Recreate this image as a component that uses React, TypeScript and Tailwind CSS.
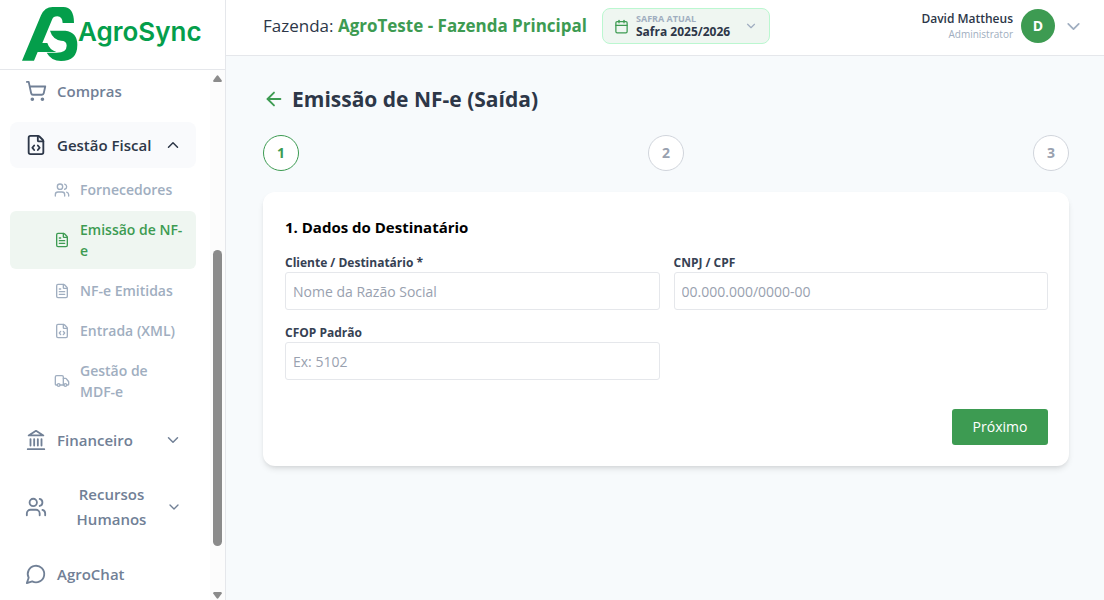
import React from 'react';
import {
  ArrowLeft,
  Calendar,
  ChevronDown,
  ChevronUp,
  FileCode,
  FileText,
  ShoppingCart,
  Truck,
  Users,
  type LucideIcon,
} from 'lucide-react';
import clsx from 'clsx';

const subItems: { label: string; icon: LucideIcon; active?: boolean }[] = [
  { label: 'Fornecedores', icon: Users },
  { label: 'Emissão de NF-e', icon: FileText, active: true },
  { label: 'NF-e Emitidas', icon: FileText },
  { label: 'Entrada (XML)', icon: FileCode },
  { label: 'Gestão de MDF-e', icon: Truck },
];

const fields = [
  {
    id: 'cliente',
    label: 'Cliente / Destinatário *',
    placeholder: 'Nome da Razão Social',
  },
  { id: 'cnpj', label: 'CNPJ / CPF', placeholder: '00.000.000/0000-00' },
  { id: 'cfop', label: 'CFOP Padrão', placeholder: 'Ex: 5102' },
];

const steps = [1, 2, 3];

const Landmark = () => (
  <svg
    className="size-[22px] shrink-0"
    viewBox="0 0 24 24"
    fill="none"
    stroke="currentColor"
    strokeWidth="2"
    strokeLinecap="round"
    strokeLinejoin="round"
  >
    <path d="M3 22h18M6 18v-7M10 18v-7M14 18v-7M18 18v-7" />
    <path d="m12 2 8 5H4Z" />
  </svg>
);

const ChatBubble = () => (
  <svg
    className="size-[22px] shrink-0"
    viewBox="0 0 24 24"
    fill="none"
    stroke="currentColor"
    strokeWidth="2"
    strokeLinecap="round"
    strokeLinejoin="round"
  >
    <path d="M7.9 20A9 9 0 1 0 4 16.1L2 22Z" />
  </svg>
);

const Logo = () => (
  <a href="#" className="flex items-center text-[#049e4b]">
    <svg className="h-[54px] w-14" viewBox="0 0 168 162" fill="currentColor">
      <path d="M0 161 57 25Q68 0 92 0H124Q156 0 156 48H122Q121 28 106 28Q94 28 90 38L61 108H76Q82 128 103 135H47L36 161Z" />
      <path d="M84 71H130Q166 76 166 113Q166 162 117 162Q88 162 74 137H104Q134 137 134 116Q134 101 117 101Q92 97 84 71Z" />
    </svg>
    <span className="pb-1 font-['Inter',sans-serif] text-[26px] leading-8 font-semibold">
      AgroSync
    </span>
  </a>
);

const navButton =
  'flex w-full items-center gap-2.5 rounded-lg py-[11px] pr-3.5 pl-[15px]';

const Sidebar = () => (
  <aside className="flex w-[226px] shrink-0 flex-col border-r border-gray-200 bg-white">
    <div className="flex h-[70px] shrink-0 items-center border-b border-gray-200 pb-0.5 pl-[22px]">
      <Logo />
    </div>
    <div className="flex min-h-0 flex-1">
      <nav className="min-w-0 flex-1 overflow-hidden pr-3.5 pl-2.5 text-[15px] leading-6 font-semibold text-[#718096]">
        <ul className="-mt-0.5">
          <li className="mb-2">
            <a href="#" className={navButton}>
              <ShoppingCart className="size-[22px] shrink-0" />
              Compras
            </a>
          </li>
          <li className="mb-[7px]">
            <button
              type="button"
              aria-expanded="true"
              className={clsx(navButton, 'bg-[#f9fafc] text-[#2d3748]')}
            >
              <FileCode className="size-[22px] shrink-0" />
              <span className="flex-1 text-left whitespace-nowrap">
                Gestão Fiscal
              </span>
              <ChevronUp size={18} className="shrink-0" />
            </button>
            <ul className="mt-[3px] flex flex-col gap-[3px] text-sm leading-[21px] text-[#a0aec0]">
              {subItems.map(({ label, icon: Icon, active }) => (
                <li key={label}>
                  <a
                    href="#"
                    className={clsx(
                      'flex items-center gap-2.5 rounded-md py-2 pr-3 pl-11',
                      active && 'bg-[#eff6f1] text-[#3d9b52]',
                    )}
                  >
                    <Icon className="size-4 shrink-0" />
                    <span>{label}</span>
                  </a>
                </li>
              ))}
            </ul>
          </li>
          <li className="mb-2">
            <button type="button" className={navButton}>
              <Landmark />
              <span className="flex-1 text-left">Financeiro</span>
              <ChevronDown size={18} className="shrink-0" />
            </button>
          </li>
          <li className="mb-2">
            <button type="button" className={navButton}>
              <Users className="size-[22px] shrink-0" />
              <span className="flex-1 pl-2.5 text-center leading-[25px]">
                Recursos Humanos
              </span>
              <ChevronDown size={16} className="shrink-0" />
            </button>
          </li>
          <li>
            <a href="#" className={navButton}>
              <ChatBubble />
              AgroChat
            </a>
          </li>
        </ul>
      </nav>
      <div className="flex w-[15px] flex-col items-center bg-[#fcfcfc] pt-[5px] text-[#8b8b8b]">
        <svg className="h-[7px] w-[9px]" viewBox="0 0 9 7" fill="currentColor">
          <path d="M3.5 1Q4.5 -.3 5.5 1L8.8 5.5Q9 7 8 7H1Q0 7 .2 5.5Z" />
        </svg>
        <div className="flex w-[9px] flex-1 flex-col pt-[168px] pb-[46px]">
          <div className="flex-1 rounded-full bg-[#8b8b8b]" />
        </div>
        <svg className="h-2 w-[9px]" viewBox="0 0 9 8" fill="currentColor">
          <path d="M3.5 6Q4.5 7.3 5.5 6L8.8 1.5Q9 0 8 0H1Q0 0 .2 1.5Z" />
        </svg>
      </div>
    </div>
  </aside>
);

const Header = () => (
  <header className="flex h-14 shrink-0 items-center justify-between border-b border-gray-200 bg-white pr-5 pb-[3px] pl-[37px]">
    <div className="flex items-center gap-[15px]">
      <p className="text-[17px] leading-6 whitespace-nowrap text-[#2d3748]">
        Fazenda:{' '}
        <strong className="font-bold text-[#3d9b52]">
          AgroTeste - Fazenda Principal
        </strong>
      </p>
      <button
        type="button"
        className="flex h-9 w-[168px] items-center gap-[7px] rounded-lg border border-[#bbf7d0] bg-[#eff6f1] px-[11px] text-left"
      >
        <Calendar size={15} className="shrink-0 text-[#3d9b52]" />
        <span className="flex flex-1 flex-col whitespace-nowrap">
          <span className="text-[9px] leading-3 font-bold text-[#a0aec0]">
            SAFRA ATUAL
          </span>
          <span className="text-xs leading-[14px] font-bold text-[#2d3748]">
            Safra 2025/2026
          </span>
        </span>
        <ChevronDown size={14} className="shrink-0 text-[#a0aec0]" />
      </button>
    </div>
    <button type="button" className="flex items-center gap-2 text-right">
      <span className="flex flex-col whitespace-nowrap">
        <span className="text-xs leading-4 font-semibold text-[#2d3748]">
          David Mattheus
        </span>
        <span className="text-[10px] leading-[15px] text-[#a0aec0]">
          Administrator
        </span>
      </span>
      <span className="flex size-[34px] items-center justify-center rounded-full bg-[#3d9b52] text-sm font-bold text-white">
        D
      </span>
      <ChevronDown size={21} className="text-[#a0aec0]" />
    </button>
  </header>
);

const App = () => {
  return (
    <div className="flex h-screen bg-[#f7fafc] font-['Open_Sans','Noto_Sans',sans-serif]">
      <Sidebar />
      <div className="flex min-w-0 flex-1 flex-col">
        <Header />
        <main className="flex-1 overflow-hidden pt-7 pr-[35px] pl-[37px]">
          <div className="flex items-center gap-[7px]">
            <button
              type="button"
              aria-label="Voltar"
              className="flex size-[22px] items-center justify-center text-[#3d9b52]"
            >
              <ArrowLeft size={22} />
            </button>
            <h1 className="text-[21px] leading-[30px] font-bold text-[#2d3748]">
              Emissão de NF-e (Saída)
            </h1>
          </div>

          <ol className="mt-[21px] flex justify-between">
            {steps.map((step) => (
              <li
                key={step}
                className={clsx(
                  'flex size-9 items-center justify-center rounded-full border bg-white text-sm font-bold',
                  step === 1
                    ? 'border-[#3d9b52] text-[#3d9b52]'
                    : 'border-gray-300 text-gray-400',
                )}
              >
                {step}
              </li>
            ))}
          </ol>

          <form className="mt-[21px] rounded-xl bg-white pt-[22px] pr-[21px] pb-[21px] pl-[22px] shadow-md">
            <h2 className="mb-3.5 text-[15px] leading-[26px] font-bold text-black">
              1. Dados do Destinatário
            </h2>
            <div className="grid grid-cols-2 gap-3.5">
              {fields.map((field) => (
                <div key={field.id} className="flex flex-col">
                  <label
                    htmlFor={field.id}
                    className="text-xs leading-[18px] font-bold text-gray-700"
                  >
                    {field.label}
                  </label>
                  <input
                    id={field.id}
                    type="text"
                    placeholder={field.placeholder}
                    className="h-[38px] w-full rounded-[3px] border border-gray-200 px-[7px] text-sm placeholder:text-gray-400"
                  />
                </div>
              ))}
            </div>
            <div className="mt-[29px] flex justify-end">
              <button
                type="button"
                className="h-9 w-24 rounded-[3px] bg-[#3d9b52] text-sm text-white"
              >
                Próximo
              </button>
            </div>
          </form>
        </main>
      </div>
    </div>
  );
};

export default App;
